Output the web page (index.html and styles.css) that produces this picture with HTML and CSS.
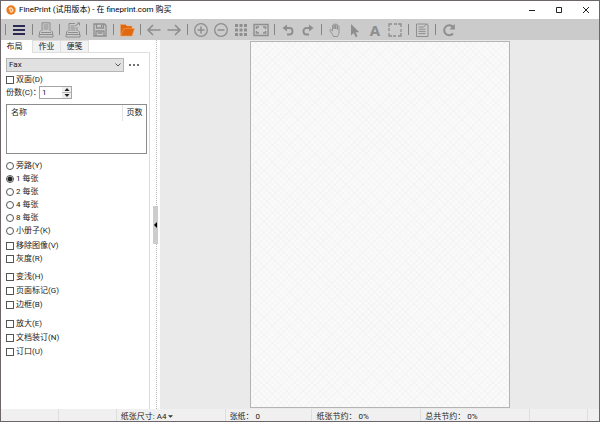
FILE: index.html
```html
<!DOCTYPE html>
<html lang="zh-CN">

<head>
    <meta charset="UTF-8">
    <meta name="viewport" content="width=device-width, initial-scale=1.0">
    <title>FinePrint</title>
    <link rel="stylesheet" href="styles.css">
</head>

<body>
    <div class="window">
        <header class="titlebar">
            <svg class="logo" viewBox="0 0 10 10">
                <circle cx="5" cy="5" r="4.7" fill="#ee7a1c" />
                <path d="M2.6 3.2 5 2l2.6 2.2-.4 2.6L5 8 3.8 6.2z" fill="#fbd9b5" />
                <path d="M4.2 4 6.2 4.6 5.2 6.4z" fill="#ee7a1c" />
            </svg>
            <h1 class="title">FinePrint (试用版本) - 在 fineprint.com 购买</h1>
            <div class="window-buttons">
                <button aria-label="最小化"><svg viewBox="0 0 8 8"><path d="M1 4.5h6" /></svg></button>
                <button aria-label="最大化"><svg viewBox="0 0 8 8"><path d="M1.5 1.5h5v5h-5z" /></svg></button>
                <button aria-label="关闭"><svg viewBox="0 0 8 8"><path d="M1 1l6 6M7 1L1 7" /></svg></button>
            </div>
        </header>

        <nav class="toolbar">
            <span class="sep"></span>
            <button class="tool menu" aria-label="菜单"><svg viewBox="0 0 16 16"><path d="M2 4h12M2 8h12M2 12h12" stroke-width="2" /></svg></button>
            <span class="sep"></span>
            <button class="tool" aria-label="打印"><svg viewBox="0 0 16 16"><path d="M4 9V.8h8V9M1.5 12.5V10L3 8.5M14.5 12.5V10L13 8.5M1 12.5h14V15H1zM5.500 3h5M5.500 5h5M5.500 7h5M3 10.500h10" /></svg></button>
            <span class="sep"></span>
            <button class="tool" aria-label="打印并关闭"><svg viewBox="0 0 16 16"><path d="M4 9V1.500h6M12 5v4M1.500 12.500V10L3 8.500M14.500 12.500V10L13 8.500M1 12.500h14V15H1zM5.500 4h4M5.500 6h5M5.500 8h5M3 10.500h10M10 4l4.500-3M12 1h2.500v2.500" /></svg></button>
            <span class="sep"></span>
            <button class="tool" aria-label="保存"><svg viewBox="0 0 16 16"><path d="M2 2h10.500L14 3.500V14H2zM4.500 2v4h7V2M4 14V9h8v5M9.500 3v2M5.500 11h5" stroke-width="1.300" /></svg></button>
            <span class="sep"></span>
            <button class="tool open" aria-label="打开"><svg viewBox="0 0 16 16"><path d="M1.500 13V2.500h5L8 4h5v3H5L2.500 13z" /><path d="M5 6.500h10.500L13 14H1.500z" /></svg></button>
            <span class="sep"></span>
            <button class="tool" aria-label="上一页"><svg viewBox="0 0 16 16"><path d="M14.500 8H2.500M7 3 2 8l5 5" stroke-width="1.600" /></svg></button>
            <button class="tool" aria-label="下一页"><svg viewBox="0 0 16 16"><path d="M1.500 8h12M9 3l5 5-5 5" stroke-width="1.600" /></svg></button>
            <span class="sep"></span>
            <button class="tool" aria-label="放大视图"><svg viewBox="0 0 16 16"><circle cx="8" cy="8" r="6.300" stroke-width="1.300" /><path d="M4.500 8h7M8 4.500v7" stroke-width="1.500" /></svg></button>
            <button class="tool" aria-label="缩小视图"><svg viewBox="0 0 16 16"><circle cx="8" cy="8" r="6.300" stroke-width="1.300" /><path d="M4.500 8h7" stroke-width="1.500" /></svg></button>
            <button class="tool" aria-label="缩略图"><svg viewBox="0 0 16 16"><path d="M2 3.500h3m1.500 0h3m1.500 0h3M2 8h3m1.500 0h3m1.500 0h3M2 12.500h3m1.500 0h3m1.500 0h3" stroke-width="3" /></svg></button>
            <button class="tool" aria-label="适合窗口"><svg viewBox="0 0 16 16"><path d="M1 2.500h14v11H1z" stroke-width="1.400" /><path d="M3.500 7V5H6M10 5h2.500v2M12.500 9v2H10M6 11H3.500V9" stroke-width="1.600" /></svg></button>
            <span class="sep"></span>
            <button class="tool" aria-label="撤消"><svg viewBox="0 0 16 16"><path d="M5 6h4.500c4 0 4 6.500 0 6.500H7" stroke-width="1.900" /><path d="M7 2.500v7L2.500 6z" fill="currentColor" stroke="none" /></svg></button>
            <button class="tool" aria-label="重做"><svg viewBox="0 0 16 16"><path d="M10 6H6.500c-4 0-4 6.500 0 6.500H9" stroke-width="1.900" /><path d="M9 2.500v7L13.500 6z" fill="currentColor" stroke="none" /></svg></button>
            <span class="sep"></span>
            <button class="tool" aria-label="手形"><svg viewBox="0 0 16 16"><path d="M5.500 12.500 2.800 8.500c-.5-1 .8-1.500 1.400-.7L5.500 9V3.500c0-1 1.500-1 1.500 0V7 2.500c0-1 1.700-1 1.700 0V7 3c0-1 1.700-1 1.700 0v4.500-3c0-1 1.600-1 1.600 0V10c0 2-.8 3-1.500 4.500H6.500z" stroke-width=".9" /></svg></button>
            <button class="tool" aria-label="选择"><svg viewBox="0 0 16 16"><path d="M4 2v11.500l2.700-2.500 2 4.200 1.900-.9-2-4.100h3.700z" fill="currentColor" stroke="none" /></svg></button>
            <button class="tool letter" aria-label="文本">A</button>
            <button class="tool" aria-label="框选"><svg viewBox="0 0 16 16"><path d="M2 5V2h3M7 2h3M11 2h3v3M14 7v3M14 11v3h-3M9 14H6M5 14H2v-3M2 9V6" stroke-width="1.300" /></svg></button>
            <span class="sep"></span>
            <button class="tool" aria-label="便笺"><svg viewBox="0 0 16 16"><path d="M2.500 2h9L14 3v11.500H2.500zM4.500 5h5M4.500 7.200h7M4.500 9.400h7M4.500 11.600h7M9.500 5l4-3.500" /></svg></button>
            <span class="sep"></span>
            <button class="tool" aria-label="刷新"><svg viewBox="0 0 16 16"><path d="M12 11.500A5 5 0 1 1 12 5" stroke-width="2" /><path d="M13.800 2v5.500H8.500z" fill="currentColor" stroke="none" /></svg></button>
        </nav>

        <main class="workspace">
            <aside class="sidebar">
                <div class="tabs">
                    <button class="tab active">布局</button>
                    <button class="tab">作业</button>
                    <button class="tab">便笺</button>
                </div>
                <form class="panel">
                    <div class="row profile">
                        <div class="select-box">
                            <select aria-label="配置">
                                <option>Fax</option>
                            </select>
                            <svg class="chevron" viewBox="0 0 6 4"><path d="M.5.5 3 3 5.500.5" /></svg>
                        </div>
                        <button type="button" class="more" aria-label="更多"><svg viewBox="0 0 10 2"><circle cx="1" cy="1" r="1" /><circle cx="5" cy="1" r="1" /><circle cx="9" cy="1" r="1" /></svg></button>
                    </div>
                    <label class="row"><input type="checkbox">双面(D)</label>
                    <div class="row copies">
                        <label for="copies">份数(C)：</label>
                        <div class="spinner">
                            <input type="text" id="copies" value="1">
                            <div class="arrows">
                                <button type="button" aria-label="增加"><svg viewBox="0 0 6 3"><path d="M3 0l2.500 3h-5z" /></svg></button>
                                <button type="button" aria-label="减少"><svg viewBox="0 0 6 3"><path d="M.5 0h5L3 3z" /></svg></button>
                            </div>
                        </div>
                    </div>
                    <div class="jobs">
                        <table>
                            <thead>
                                <tr>
                                    <th>名称</th>
                                    <th class="pages">页数</th>
                                </tr>
                            </thead>
                        </table>
                    </div>
                    <div class="group">
                        <label class="row"><input type="radio" name="nup">旁路(Y)</label>
                        <label class="row"><input type="radio" name="nup" checked>1 每张</label>
                        <label class="row"><input type="radio" name="nup">2 每张</label>
                        <label class="row"><input type="radio" name="nup">4 每张</label>
                        <label class="row"><input type="radio" name="nup">8 每张</label>
                        <label class="row"><input type="radio" name="nup">小册子(K)</label>
                    </div>
                    <div class="group images">
                        <label class="row"><input type="checkbox">移除图像(V)</label>
                        <label class="row"><input type="checkbox">灰度(R)</label>
                    </div>
                    <div class="group loose">
                        <label class="row"><input type="checkbox">变浅(H)</label>
                        <label class="row"><input type="checkbox">页面标记(G)</label>
                        <label class="row"><input type="checkbox">边框(B)</label>
                    </div>
                    <div class="group loose">
                        <label class="row"><input type="checkbox">放大(E)</label>
                        <label class="row"><input type="checkbox">文档装订(N)</label>
                        <label class="row"><input type="checkbox">订口(U)</label>
                    </div>
                </form>
            </aside>
            <div class="splitter">
                <button class="handle" aria-label="折叠"><svg viewBox="0 0 3 6"><path d="M3 0v6L0 3z" /></svg></button>
            </div>
            <section class="preview">
                <div class="paper"></div>
            </section>
        </main>

        <footer class="statusbar">
            <span class="cell c1"></span>
            <span class="cell c1"></span>
            <button class="cell c2">纸张尺寸: A4 <svg class="caret" viewBox="0 0 6 3"><path d="M0 0h6L3 3z" /></svg></button>
            <span class="cell c3">张纸： 0</span>
            <span class="cell c2">纸张节约： 0%</span>
            <span class="cell c2">总共节约： 0%</span>
            <span class="cell c1"></span>
        </footer>
    </div>
</body>

</html>
```
FILE: styles.css
```css
* {
    box-sizing: border-box;
}

body {
    margin: 0;
    font-family: Roboto, "Noto Sans CJK SC", sans-serif;
    font-size: 8px;
    line-height: 12px;
    color: #222;
}

button,
input,
select {
    margin: 0;
    padding: 0;
    border: 0;
    background: none;
    font: inherit;
    color: inherit;
}

svg {
    display: block;
    fill: none;
    stroke: currentColor;
}

.window {
    display: flex;
    flex-direction: column;
    height: 100vh;
    border: 1px solid #6c6569;
    background: #fff;
}

/* title bar */
.titlebar {
    display: flex;
    align-items: center;
    height: 18px;
    padding-left: 5px;
    gap: 3px;
}

.logo {
    width: 10px;
    height: 10px;
    stroke: none;
}

.title {
    flex: 1;
    margin: 0;
    font-size: 8px;
    font-weight: 400;
    color: #000;
    white-space: nowrap;
}

.window-buttons {
    display: flex;
}

.window-buttons button {
    display: flex;
    justify-content: center;
    width: 27px;
}

.window-buttons svg {
    width: 8px;
    height: 8px;
}

/* toolbar */
.toolbar {
    display: flex;
    align-items: center;
    height: 21px;
    padding-left: 1px;
    background: #cbcbcb;
    color: #8e8e8e;
}

.sep {
    width: 1px;
    height: 11px;
    margin: 0 3px;
    background: #858585;
}

.tool {
    display: flex;
    align-items: center;
    justify-content: center;
    width: 20px;
    height: 20px;
}

.tool svg {
    width: 16px;
    height: 16px;
}

.menu {
    color: #2c2a55;
}

.open {
    color: #e0690f;
}

.open svg {
    fill: currentColor;
    stroke: #f3a263;
    stroke-width: 0.5;
}

.letter {
    font-family: "Noto Sans", sans-serif;
    font-size: 15px;
    font-weight: 700;
}

/* left side */
.workspace {
    display: flex;
    flex: 1;
    min-height: 0;
}

.sidebar {
    display: flex;
    flex-direction: column;
    width: 149px;
    padding-left: 1px;
}

.tabs {
    display: flex;
    height: 13px;
}

.tabs::after {
    content: "";
    flex: 1;
    border-bottom: 1px solid #dedede;
}

.tab {
    width: 28px;
    border: 1px solid #dedede;
    border-left: 0;
    background: #f2f2f2;
    line-height: 11px;
}

.tab.active {
    width: 31px;
    border-top: 0;
    border-bottom: 0;
    background: #fff;
    padding-right: 5px;
}

.panel {
    flex: 1;
    border-right: 1px solid #dcdcdc;
    padding: 4px 2px 0 4px;
}

.row {
    display: flex;
    align-items: center;
    height: 13px;
    white-space: nowrap;
}

.row input[type="checkbox"],
.row input[type="radio"] {
    appearance: none;
    width: 8px;
    height: 8px;
    margin-right: 2px;
    border: 1px solid #555;
    background: #fff;
}

.row input[type="radio"] {
    border-radius: 50%;
}

.row input[type="radio"]:checked {
    background: radial-gradient(circle, #222 0 2px, #fff 3px);
}

.profile {
    height: 15px;
    margin-bottom: 1px;
    gap: 5px;
}

.select-box {
    position: relative;
    width: 118px;
}

.select-box select {
    appearance: none;
    display: block;
    width: 100%;
    height: 14px;
    padding-left: 2px;
    border: 1px solid #b5b5b5;
    background: #e1e1e1;
}

.chevron {
    position: absolute;
    top: 5px;
    right: 3px;
    width: 6px;
    height: 4px;
    stroke: #555;
}

.more svg {
    width: 10px;
    height: 2px;
    fill: #444;
    stroke: none;
}

.copies label {
    width: 33px;
}

.spinner {
    display: flex;
    width: 33px;
    height: 13px;
    border: 1px solid #a5a5a5;
}

.spinner input {
    width: 22px;
    padding-left: 2px;
}

.arrows {
    display: flex;
    flex: 1;
    flex-direction: column;
    gap: 1px;
    background: #bbb;
}

.arrows button {
    display: flex;
    flex: 1;
    align-items: center;
    justify-content: center;
    background: #eee;
}

.arrows svg {
    width: 6px;
    height: 3px;
    fill: #222;
    stroke: none;
}

.jobs {
    height: 50px;
    margin: 5px 0;
    border: 1px solid #8c8c8c;
}

.jobs table {
    width: 100%;
    border-collapse: collapse;
}

.jobs th {
    padding: 2px 4px;
    font-weight: 400;
    text-align: left;
}

.jobs .pages {
    width: 24px;
    border-left: 1px solid #e2e2e2;
    padding-right: 0;
}

.images {
    margin-top: 2px;
}

.loose {
    margin-top: 5px;
}

.loose .row {
    height: 14px;
}

.splitter {
    display: flex;
    align-items: center;
    justify-content: center;
    width: 10px;
    background: repeating-linear-gradient(#b5b5b5 0 1px, #fff 1px 2px) 6px 0 / 1px 100% no-repeat;
}

.handle {
    display: flex;
    align-items: center;
    justify-content: center;
    width: 5px;
    height: 38px;
    background: #cdcdcd;
}

.handle svg {
    width: 3px;
    height: 6px;
    fill: #000;
    stroke: none;
}

/* page preview */
.preview {
    display: flex;
    flex: 1;
    justify-content: center;
    padding: 1px 0 1px 1px;
    background: #eaeaea;
}

.paper {
    height: 100%;
    aspect-ratio: 260 / 368;
    border: 1px solid #b4b4b4;
    background: repeating-linear-gradient(45deg, #f0f0f080 0 1px, transparent 1px 4px),
        repeating-linear-gradient(-45deg, #f0f0f080 0 1px, transparent 1px 4px), #fafafa;
}

/* status bar */
.statusbar {
    display: flex;
    height: 12px;
    padding-right: 11px;
    background: #f0f0f0;
}

.cell {
    display: flex;
    align-items: center;
    border-right: 1px solid #dedede;
    padding: 3px 0 0 4px;
    line-height: 9px;
    white-space: pre;
}

.c1 {
    flex: 53 0 0;
}

.c2 {
    flex: 104 0 0;
}

.c3 {
    flex: 82 0 0;
}

.caret {
    width: 5px;
    height: 3px;
    fill: #333;
    stroke: none;
}
```
